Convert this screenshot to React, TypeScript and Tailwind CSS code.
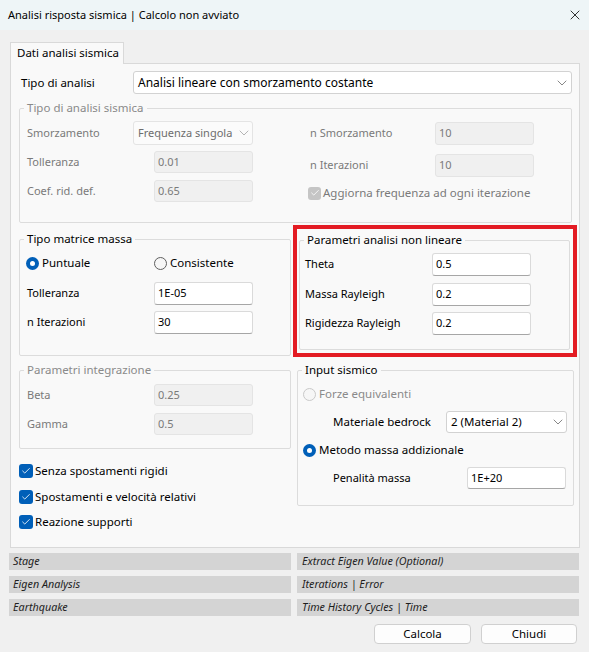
import { X, ChevronDown, Check } from "lucide-react";
import type { ReactNode } from "react";

function TextBox({ value, disabled, className = "" }: { value: string; disabled?: boolean; className?: string }) {
  return (
    <div
      className={`flex items-center pl-[3px] rounded-[3px] border ${
        disabled
          ? "bg-[#f0f0f0] border-[#e4e4e4] text-[#7a7a7a]"
          : "bg-white border-[#dadada] border-b-[#a6a6a6]"
      } ${className}`}
    >
      {value}
    </div>
  );
}

function Combo({ value, disabled, className = "" }: { value: string; disabled?: boolean; className?: string }) {
  return (
    <div
      className={`flex items-center justify-between pl-[4px] rounded-[3px] border ${
        disabled ? "bg-[#fbfbfb] border-[#e4e4e4] text-[#6d6d6d]" : "bg-white border-[#d2d2d2]"
      } ${className}`}
    >
      <span>{value}</span>
      <ChevronDown size={16} strokeWidth={1.1} className={disabled ? "text-[#9a9a9a]" : "text-[#5a5a5a]"} />
    </div>
  );
}

function Radio({ checked, disabled }: { checked?: boolean; disabled?: boolean }) {
  if (checked)
    return (
      <span className="w-[13px] h-[13px] rounded-full bg-[#005fb8] flex items-center justify-center shrink-0">
        <span className="w-[5px] h-[5px] rounded-full bg-white" />
      </span>
    );
  return (
    <span
      className={`w-[13px] h-[13px] rounded-full border shrink-0 ${
        disabled ? "border-[#c9c9c9] bg-[#f6f6f6]" : "border-[#5f5f5f] bg-[#f6f6f6]"
      }`}
    />
  );
}

function CheckBox({ disabled }: { disabled?: boolean }) {
  return (
    <span
      className={`rounded-[3px] flex items-center justify-center shrink-0 ${
        disabled ? "w-[13px] h-[13px] bg-[#c5c5c5]" : "w-[14px] h-[14px] bg-[#005fb8]"
      }`}
    >
      <Check size={10} strokeWidth={2} className="text-white" />
    </span>
  );
}

function Group({ title, disabled, className = "", children }: { title: string; disabled?: boolean; className?: string; children: ReactNode }) {
  return (
    <fieldset className={`border border-[#dcdcdc] rounded-[2px] ${className}`}>
      <legend className={`ml-[4px] px-[3px] leading-[16px] text-[11.5px] ${disabled ? "text-[#8a8a8a]" : "text-black"}`}>{title}</legend>
      {children}
    </fieldset>
  );
}

function Row({ label, children, disabled, className = "" }: { label: string; children: ReactNode; disabled?: boolean; className?: string }) {
  return (
    <div className={`flex items-center justify-between ${className}`}>
      <span className={disabled ? "text-[#7a7a7a]" : ""}>{label}</span>
      {children}
    </div>
  );
}

export default function App() {
  return (
    <div className="w-[589px] h-[652px] bg-[#f0f0f0] text-[11px] text-black whitespace-nowrap [font-family:'Noto_Sans',sans-serif] flex flex-col overflow-hidden">
      {/* barra titolo */}
      <div className="h-[30px] bg-[#eef5f7] flex items-center justify-between pl-[8px] pr-[6px] shrink-0">
        <span className="text-[11px]">Analisi risposta sismica | Calcolo non avviato</span>
        <X size={16} strokeWidth={1.2} />
      </div>

      <div className="pl-[10px] mt-[12px]">
        <div className="w-[114px] h-[22px] border border-b-0 border-[#d9d9d9] bg-[#f9f9f9] pl-[6px] leading-[20px] text-[11.5px] relative z-10 -mb-px">
          Dati analisi sismica
        </div>
        <div className="w-[570px] h-[485px] border border-[#d9d9d9] bg-[#f9f9f9]">
          <div className="flex items-center mt-[7px] ml-[10px]">
            <span className="w-[112px] text-[11.5px]">Tipo di analisi</span>
            <Combo value="Analisi lineare con smorzamento costante" className="w-[439px] h-[23px] pr-[1px] text-[12px]" />
          </div>

          <div className="pl-[8px]">
            {/* gruppo disabilitato */}
            <Group title="Tipo di analisi sismica" disabled className="mt-[6px] w-[553px] h-[123px]">
              <div className="flex">
                <div className="w-[226px] ml-[7px] pt-[5px] flex flex-col">
                  <Row label="Smorzamento" disabled className="h-[24px]">
                    <Combo value="Frequenza singola" disabled className="w-[120px] h-[24px] pl-[3px]" />
                  </Row>
                  <Row label="Tolleranza" disabled className="h-[22px] mt-[6px]">
                    <TextBox value="0.01" disabled className="w-[99px] h-[22px]" />
                  </Row>
                  <Row label="Coef. rid. def." disabled className="h-[22px] mt-[7px]">
                    <TextBox value="0.65" disabled className="w-[99px] h-[22px]" />
                  </Row>
                </div>
                <div className="w-[224px] ml-[57px] pt-[6px] flex flex-col">
                  <Row label="n Smorzamento" disabled className="h-[23px]">
                    <TextBox value="10" disabled className="w-[99px] h-[23px]" />
                  </Row>
                  <Row label="n Iterazioni" disabled className="h-[23px] mt-[9px]">
                    <TextBox value="10" disabled className="w-[99px] h-[23px]" />
                  </Row>
                  <div className="flex items-center gap-[2px] h-[22px] mt-[5px] -ml-[2px] text-[#7a7a7a] text-[11.5px]">
                    <CheckBox disabled />
                    <span>Aggiorna frequenza ad ogni iterazione</span>
                  </div>
                </div>
              </div>
            </Group>

            <div className="flex items-start mt-[2px]">
              <Group title="Tipo matrice massa" className="mt-[6px] w-[272px] h-[125px]">
                <div className="pl-[6px] pt-[8px] flex flex-col">
                  <div className="flex items-center h-[16px] text-[11.5px]">
                    <div className="w-[128px] flex items-center gap-[3px]">
                      <Radio checked />
                      <span>Puntuale</span>
                    </div>
                    <div className="flex items-center gap-[3px]">
                      <Radio />
                      <span>Consistente</span>
                    </div>
                  </div>
                  <Row label="Tolleranza" className="w-[226px] ml-[1px] h-[23px] mt-[11px]">
                    <TextBox value="1E-05" className="w-[99px] h-[23px]" />
                  </Row>
                  <Row label="n Iterazioni" className="w-[226px] ml-[1px] h-[23px] mt-[6px]">
                    <TextBox value="30" className="w-[99px] h-[23px]" />
                  </Row>
                </div>
              </Group>

              {/* evidenziazione rossa */}
              <div className="ml-[2px] w-[284px] h-[132px] border-[4px] border-[#e31b23]">
                <Group title="Parametri analisi non lineare" className="ml-[2px] mt-[3px] w-[271px] h-[118px]">
                  <div className="pl-[5px] pt-[5px] flex flex-col">
                    <Row label="Theta" className="w-[226px] h-[23px]">
                      <TextBox value="0.5" className="w-[99px] h-[23px]" />
                    </Row>
                    <Row label="Massa Rayleigh" className="w-[226px] h-[23px] mt-[7px]">
                      <TextBox value="0.2" className="w-[99px] h-[23px]" />
                    </Row>
                    <Row label="Rigidezza Rayleigh" className="w-[226px] h-[23px] mt-[6px]">
                      <TextBox value="0.2" className="w-[99px] h-[23px]" />
                    </Row>
                  </div>
                </Group>
              </div>
            </div>

            <div className="flex items-start mt-[5px]">
              <div className="w-[272px] flex flex-col">
                <Group title="Parametri integrazione" disabled className="w-[272px] h-[87px]">
                  <div className="pl-[7px] pt-[6px] flex flex-col">
                    <Row label="Beta" disabled className="w-[226px] h-[22px]">
                      <TextBox value="0.25" disabled className="w-[99px] h-[22px]" />
                    </Row>
                    <Row label="Gamma" disabled className="w-[226px] h-[22px] mt-[7px]">
                      <TextBox value="0.5" disabled className="w-[99px] h-[22px]" />
                    </Row>
                  </div>
                </Group>
                <div className="flex flex-col mt-[12px] text-[11.5px]">
                  <div className="flex items-center gap-[2px] h-[20px]">
                    <CheckBox />
                    <span>Senza spostamenti rigidi</span>
                  </div>
                  <div className="flex items-center gap-[2px] h-[20px] mt-[6px]">
                    <CheckBox />
                    <span>Spostamenti e velocità relativi</span>
                  </div>
                  <div className="flex items-center gap-[2px] h-[20px] mt-[5px]">
                    <CheckBox />
                    <span>Reazione supporti</span>
                  </div>
                </div>
              </div>

              <Group title="Input sismico" className="ml-[6px] w-[277px] h-[144px]">
                <div className="pl-[5px] pt-[8px] flex flex-col">
                  <div className="flex items-center gap-[3px] h-[16px] text-[#8a8a8a] text-[11.5px]">
                    <Radio disabled />
                    <span>Forze equivalenti</span>
                  </div>
                  <Row label="Materiale bedrock" className="ml-[30px] w-[234px] h-[22px] mt-[9px] text-[11.5px]">
                    <Combo value="2 (Material 2)" className="w-[121px] h-[22px]" />
                  </Row>
                  <div className="flex items-center gap-[3px] h-[16px] mt-[9px] text-[11.5px]">
                    <Radio checked />
                    <span>Metodo massa addizionale</span>
                  </div>
                  <Row label="Penalità massa" className="ml-[30px] w-[233px] h-[22px] mt-[9px]">
                    <TextBox value="1E+20" className="w-[99px] h-[22px]" />
                  </Row>
                </div>
              </Group>
            </div>
          </div>
        </div>
      </div>

      {/* barre risultati */}
      <div className="pl-[9px] mt-[5px] flex gap-[6px] italic text-[#1e1e1e] text-[10.75px]">
        <div className="w-[282px] flex flex-col gap-[6px]">
          <div className="h-[17px] bg-[#d4d4d4] pl-[4px] leading-[17px]">Stage</div>
          <div className="h-[17px] bg-[#d4d4d4] pl-[4px] leading-[17px]">Eigen Analysis</div>
          <div className="h-[17px] bg-[#d4d4d4] pl-[4px] leading-[17px]">Earthquake</div>
        </div>
        <div className="w-[282px] flex flex-col gap-[6px]">
          <div className="h-[17px] bg-[#d4d4d4] pl-[5px] leading-[17px]">Extract Eigen Value (Optional)</div>
          <div className="h-[17px] bg-[#d4d4d4] pl-[5px] leading-[17px]">Iterations | Error</div>
          <div className="h-[17px] bg-[#d4d4d4] pl-[5px] leading-[17px]">Time History Cycles | Time</div>
        </div>
      </div>

      <div className="flex justify-end gap-[10px] pr-[12px] mt-[8px] text-[11.5px]">
        <button className="w-[97px] h-[20px] bg-[#fdfdfd] border border-[#d0d0d0] rounded-[4px] leading-[18px]">Calcola</button>
        <button className="w-[96px] h-[20px] bg-[#fdfdfd] border border-[#d0d0d0] rounded-[4px] leading-[18px]">Chiudi</button>
      </div>
    </div>
  );
}
